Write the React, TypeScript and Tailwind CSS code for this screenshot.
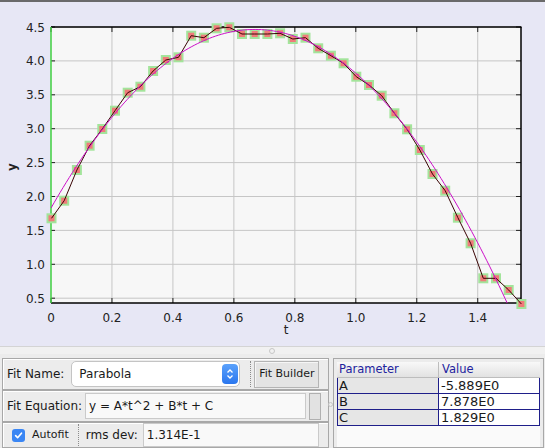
import React from "react";

const PX0 = 51, PX1 = 521, PY0 = 27, PY1 = 303;
const xs = (t: number) => PX0 + t * 304.8;
const ys = (v: number) => PY0 + (4.5 - v) * 67.8;

const dataY = [218.3, 200.7, 170, 145.7, 129, 110.7, 92.7, 86.7, 71, 60, 57.3, 35.7, 37.7, 28.3, 27.3, 34, 34, 34, 33.3, 39, 37.7, 48.3, 55.7, 63.3, 76.7, 85, 95.7, 113.3, 129.3, 150, 174, 190.7, 217.7, 243.3, 278.3, 278.3, 290, 304];
const pts = dataY.map((y, i) => [51.5 + i * 12.7, y]);

function Chart() {
  const xt = [0, 0.2, 0.4, 0.6, 0.8, 1.0, 1.2, 1.4];
  const yt = [0.5, 1.0, 1.5, 2.0, 2.5, 3.0, 3.5, 4.0, 4.5];
  const curve: string[] = [];
  for (let i = 0; i <= 160; i++) {
    const t = i * 0.01;
    const v = -5.889 * t * t + 7.878 * t + 1.829;
    curve.push(`${i === 0 ? "M" : "L"}${xs(t).toFixed(2)},${ys(v).toFixed(2)}`);
  }
  const line = pts.map((p, i) => `${i === 0 ? "M" : "L"}${p[0]},${p[1]}`).join(" ");
  return (
    <svg width={545} height={344} viewBox="0 2 545 344" className="block">
      <defs>
        <clipPath id="plotclip">
          <rect x={PX0} y={PY0} width={PX1 - PX0} height={PY1 - PY0} />
        </clipPath>
      </defs>
      <rect x={PX0} y={PY0} width={PX1 - PX0} height={PY1 - PY0} fill="#f7f7f7" />
      {xt.slice(1).map((t) => (
        <line key={"gx" + t} x1={xs(t)} x2={xs(t)} y1={PY0} y2={PY1} stroke="#c6c6c6" strokeWidth={1} />
      ))}
      {yt.map((v) => (
        <line key={"gy" + v} x1={PX0} x2={PX1} y1={ys(v)} y2={ys(v)} stroke="#c6c6c6" strokeWidth={1} />
      ))}
      {xt.map((t) => (
        <g key={"tx" + t}>
          <line x1={xs(t)} x2={xs(t)} y1={PY1} y2={PY1 - 5} stroke="#222" />
          <line x1={xs(t)} x2={xs(t)} y1={PY0} y2={PY0 + 5} stroke="#222" />
          <text x={xs(t)} y={322} textAnchor="middle" fontSize={12} fill="#222" fontFamily="DejaVu Sans, sans-serif">
            {t === 0 ? "0" : t.toFixed(1)}
          </text>
        </g>
      ))}
      {yt.map((v) => (
        <g key={"ty" + v}>
          <line x1={PX0} x2={PX0 + 4} y1={ys(v)} y2={ys(v)} stroke="#222" />
          <line x1={PX1} x2={PX1 - 5} y1={ys(v)} y2={ys(v)} stroke="#222" />
          <text x={45} y={ys(v) + 4.5} textAnchor="end" fontSize={12} fill="#222" fontFamily="DejaVu Sans, sans-serif">
            {v.toFixed(1)}
          </text>
        </g>
      ))}
      <line x1={PX0} x2={PX1 + 0.5} y1={PY0} y2={PY0} stroke="#000" strokeWidth={1.5} />
      <line x1={PX1} x2={PX1} y1={PY0} y2={PY1} stroke="#000" strokeWidth={1.5} />
      <line x1={PX0} x2={PX1 + 0.5} y1={PY1} y2={PY1} stroke="#000" strokeWidth={1.5} />
      <line x1={PX0} x2={PX0} y1={PY0} y2={PY1} stroke="#3fcf3f" strokeWidth={1.5} />
      {pts.map((p, i) => (
        <rect key={"g" + i} x={p[0] - 5} y={p[1] - 5} width={10} height={10} fill="#a3e49b" />
      ))}
      {pts.map((p, i) => (
        <rect key={"r" + i} x={p[0] - 3} y={p[1] - 3} width={6} height={6} fill="#f07a7a" />
      ))}
      <path d={line} fill="none" stroke="#3a0505" strokeWidth={1} />
      <path d={curve.join(" ")} fill="none" stroke="#cc10c8" strokeWidth={1} clipPath="url(#plotclip)" />
      <text x={286} y={334} textAnchor="middle" fontSize={12} fill="#222" fontFamily="DejaVu Sans, sans-serif">t</text>
      <text x={0} y={0} transform="translate(16 167) rotate(-90)" textAnchor="middle" fontSize={12} fontWeight="bold" fill="#222" fontFamily="DejaVu Sans, sans-serif">y</text>
    </svg>
  );
}

function Check() {
  return (
    <div className="w-[13px] h-[13px] rounded-[3px] bg-[#3a86f4] flex items-center justify-center">
      <svg width="9" height="9" viewBox="0 0 10 10">
        <path d="M1.8 5.2 L4 7.4 L8.3 2.4" fill="none" stroke="#fff" strokeWidth="1.8" strokeLinecap="round" strokeLinejoin="round" />
      </svg>
    </div>
  );
}

function Stepper() {
  return (
    <div className="w-[16px] h-[20px] rounded-[4px] bg-gradient-to-b from-[#5aa1fb] to-[#2a76ee] flex items-center justify-center">
      <svg width="8" height="12" viewBox="0 0 8 12">
        <path d="M1.5 4.5 L4 2 L6.5 4.5" fill="none" stroke="#fff" strokeWidth="1.3" />
        <path d="M1.5 7.5 L4 10 L6.5 7.5" fill="none" stroke="#fff" strokeWidth="1.3" />
      </svg>
    </div>
  );
}

const rowBox = "border border-[#a8a8a8] shadow-[inset_1px_1px_0_#ffffff] flex items-center";

export default function App() {
  const params = [
    ["A", "-5.889E0"],
    ["B", "7.878E0"],
    ["C", "1.829E0"],
  ];
  return (
    <div className="w-[545px] h-[448px] overflow-hidden flex flex-col bg-[#ececec] font-['DejaVu_Sans',sans-serif] text-[#1a1a1a]">
      <div className="h-[2px] shrink-0 bg-[#6a6a6a]" />
      <div className="h-[344px] shrink-0 bg-[#e7e7f5]">
        <Chart />
      </div>
      <div className="h-[8px] shrink-0 relative border-t border-[#d4d4d4] bg-[#f1f1f1]">
        <div className="absolute left-[269px] top-[1px] w-[6px] h-[6px] rounded-full border border-[#c6c6c6]" />
      </div>
      <div className="flex-1 flex pl-[2px] pt-[4px] gap-[4px] min-h-0">
        <div className="w-[327px] flex flex-col relative">
          <div className={rowBox + " h-[33px] pl-[4px]"}>
            <span className="text-[12px]">Fit Name:</span>
            <div className="ml-[7px] w-[169px] h-[26px] bg-white border border-[#c4c4c4] rounded-[5px] flex items-center justify-between pl-[7px] pr-[1px]">
              <span className="text-[12px]">Parabola</span>
              <Stepper />
            </div>
            <div className="ml-[10px] h-[26px] border-l border-dotted border-[#8c8c8c]" />
            <div className="ml-[3px] w-[65px] h-[27px] bg-[#e4e4e4] border border-[#b4b4b4] shadow-[inset_1px_1px_0_#f6f6f6] flex items-center justify-center">
              <span className="text-[11px]">Fit Builder</span>
            </div>
          </div>
          <div className={rowBox + " h-[32px] pl-[4px]"}>
            <span className="text-[12px]">Fit Equation:</span>
            <div className="ml-[3px] w-[221px] h-[26px] bg-[#f9f9f9] border border-[#cacaca] flex items-center pl-[3px]">
              <span className="text-[12px]">y = A*t^2 + B*t + C</span>
            </div>
            <div className="ml-[3px] w-[12px] h-[27px] bg-[#e2e2e2] border border-[#b0b0b0]" />
          </div>
          <div className={rowBox + " flex-1 pl-[9px]"}>
            <Check />
            <span className="ml-[7px] text-[11px]">Autofit</span>
            <div className="ml-[9px] h-[22px] border-l border-dotted border-[#8c8c8c]" />
            <span className="ml-[7px] text-[12px]">rms dev:</span>
            <div className="ml-[5px] w-[176px] h-[24px] bg-[#f9f9f9] border border-[#cacaca] flex items-center pl-[3px]">
              <span className="text-[12px]">1.314E-1</span>
            </div>
          </div>
          <div className="absolute right-[-4px] top-[44px] w-[5px] h-[5px] rounded-full border border-[#c6c6c6]" />
        </div>
        <div className="w-[211px] border border-[#a8a8a8] bg-[#ececec] p-[3px] pb-0 flex flex-col">
          <div className="flex-1 bg-[#fafafa] flex flex-col">
            <div className="h-[16px] flex bg-gradient-to-b from-[#f8f8f8] to-[#e2e2e2] border-b border-[#bdbdbd] text-[11.5px] text-[#22229e] leading-[15px]">
              <div className="w-[102px] pl-[2px] border-r border-[#bdbdbd]">Parameter</div>
              <div className="flex-1 pl-[3px]">Value</div>
            </div>
            {params.map(([k, v]) => (
              <div key={k} className="h-[16px] flex border-x border-b border-[#1f1f8a] text-[13px] leading-[15px]">
                <div className="w-[101px] bg-[#e6e6e6] pl-[1px] border-r border-[#1f1f8a]">{k}</div>
                <div className="flex-1 bg-white pl-[2px]">{v}</div>
              </div>
            ))}
          </div>
        </div>
      </div>
    </div>
  );
}
